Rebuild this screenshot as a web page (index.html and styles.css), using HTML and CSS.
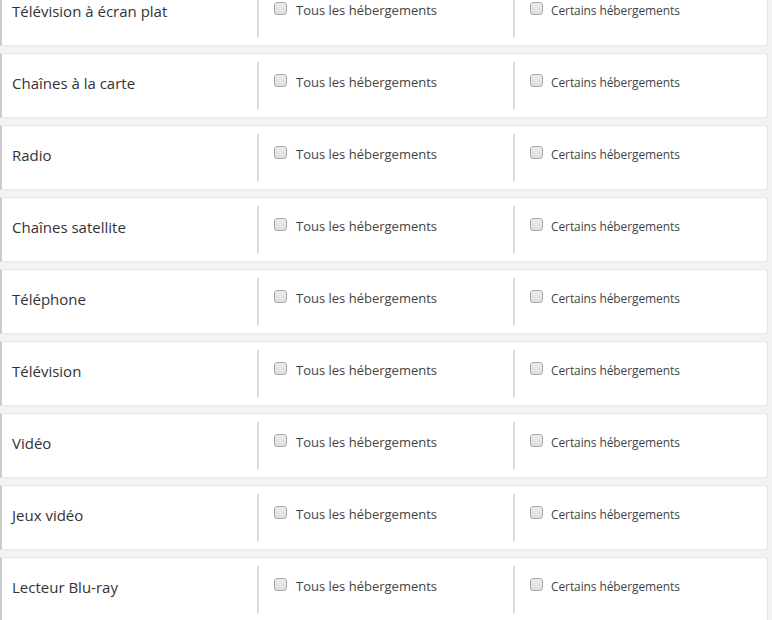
FILE: index.html
```html
<!DOCTYPE html>
<html lang="fr">
<head>
<meta charset="utf-8">
<link rel="stylesheet" href="styles.css">
</head>
<body>
<div class="list">
  <div class="card"><div class="label">Télévision à écran plat</div><label class="opt"><input type="checkbox"><span>Tous les hébergements</span></label><label class="opt opt-some"><input type="checkbox"><span>Certains hébergements</span></label></div>
  <div class="card"><div class="label">Chaînes à la carte</div><label class="opt"><input type="checkbox"><span>Tous les hébergements</span></label><label class="opt opt-some"><input type="checkbox"><span>Certains hébergements</span></label></div>
  <div class="card"><div class="label">Radio</div><label class="opt"><input type="checkbox"><span>Tous les hébergements</span></label><label class="opt opt-some"><input type="checkbox"><span>Certains hébergements</span></label></div>
  <div class="card"><div class="label">Chaînes satellite</div><label class="opt"><input type="checkbox"><span>Tous les hébergements</span></label><label class="opt opt-some"><input type="checkbox"><span>Certains hébergements</span></label></div>
  <div class="card"><div class="label">Téléphone</div><label class="opt"><input type="checkbox"><span>Tous les hébergements</span></label><label class="opt opt-some"><input type="checkbox"><span>Certains hébergements</span></label></div>
  <div class="card"><div class="label">Télévision</div><label class="opt"><input type="checkbox"><span>Tous les hébergements</span></label><label class="opt opt-some"><input type="checkbox"><span>Certains hébergements</span></label></div>
  <div class="card"><div class="label">Vidéo</div><label class="opt"><input type="checkbox"><span>Tous les hébergements</span></label><label class="opt opt-some"><input type="checkbox"><span>Certains hébergements</span></label></div>
  <div class="card"><div class="label">Jeux vidéo</div><label class="opt"><input type="checkbox"><span>Tous les hébergements</span></label><label class="opt opt-some"><input type="checkbox"><span>Certains hébergements</span></label></div>
  <div class="card"><div class="label">Lecteur Blu-ray</div><label class="opt"><input type="checkbox"><span>Tous les hébergements</span></label><label class="opt opt-some"><input type="checkbox"><span>Certains hébergements</span></label></div>
</div>
</body>
</html>
```
FILE: styles.css
```css
html, body {
  margin: 0;
  padding: 0;
  background: #f3f3f3;
  font-family: "Open Sans", "Liberation Sans", sans-serif;
  overflow: hidden;
}
.list {
  margin-top: -19px;
  width: 768px;
}
.card {
  box-sizing: border-box;
  display: flex;
  height: 65px;
  padding: 8px 0;
  margin-bottom: 7px;
  background: #fff;
  border: 1px solid #e6e6e6;
  border-left: 2px solid #cccccc;
  border-radius: 0 3px 3px 0;
}
.label {
  box-sizing: border-box;
  width: 255px;
  padding: 0 0 5px 10px;
  display: flex;
  align-items: center;
  font-size: 15px;
  color: #333;
}
.opt {
  box-sizing: border-box;
  width: 256px;
  display: flex;
  align-items: flex-start;
  padding: 10px 0 0 15px;
  border-left: 2px solid #dcdcdc;
  font-size: 13px;
  line-height: 20px;
  color: #444;
}
.opt-some {
  width: 253px;
  font-size: 12px;
  letter-spacing: -0.1px;
}
.opt-some span {
  padding-top: 1px;
}
.opt input {
  -webkit-appearance: none;
  appearance: none;
  box-sizing: border-box;
  width: 13px;
  height: 13px;
  margin: 2px 9px 0 0;
  border: 1px solid #a9a9a9;
  border-radius: 3px;
  background: linear-gradient(#ececec, #dedede);
  flex: none;
}
.opt-some input {
  margin-right: 8px;
}
```
